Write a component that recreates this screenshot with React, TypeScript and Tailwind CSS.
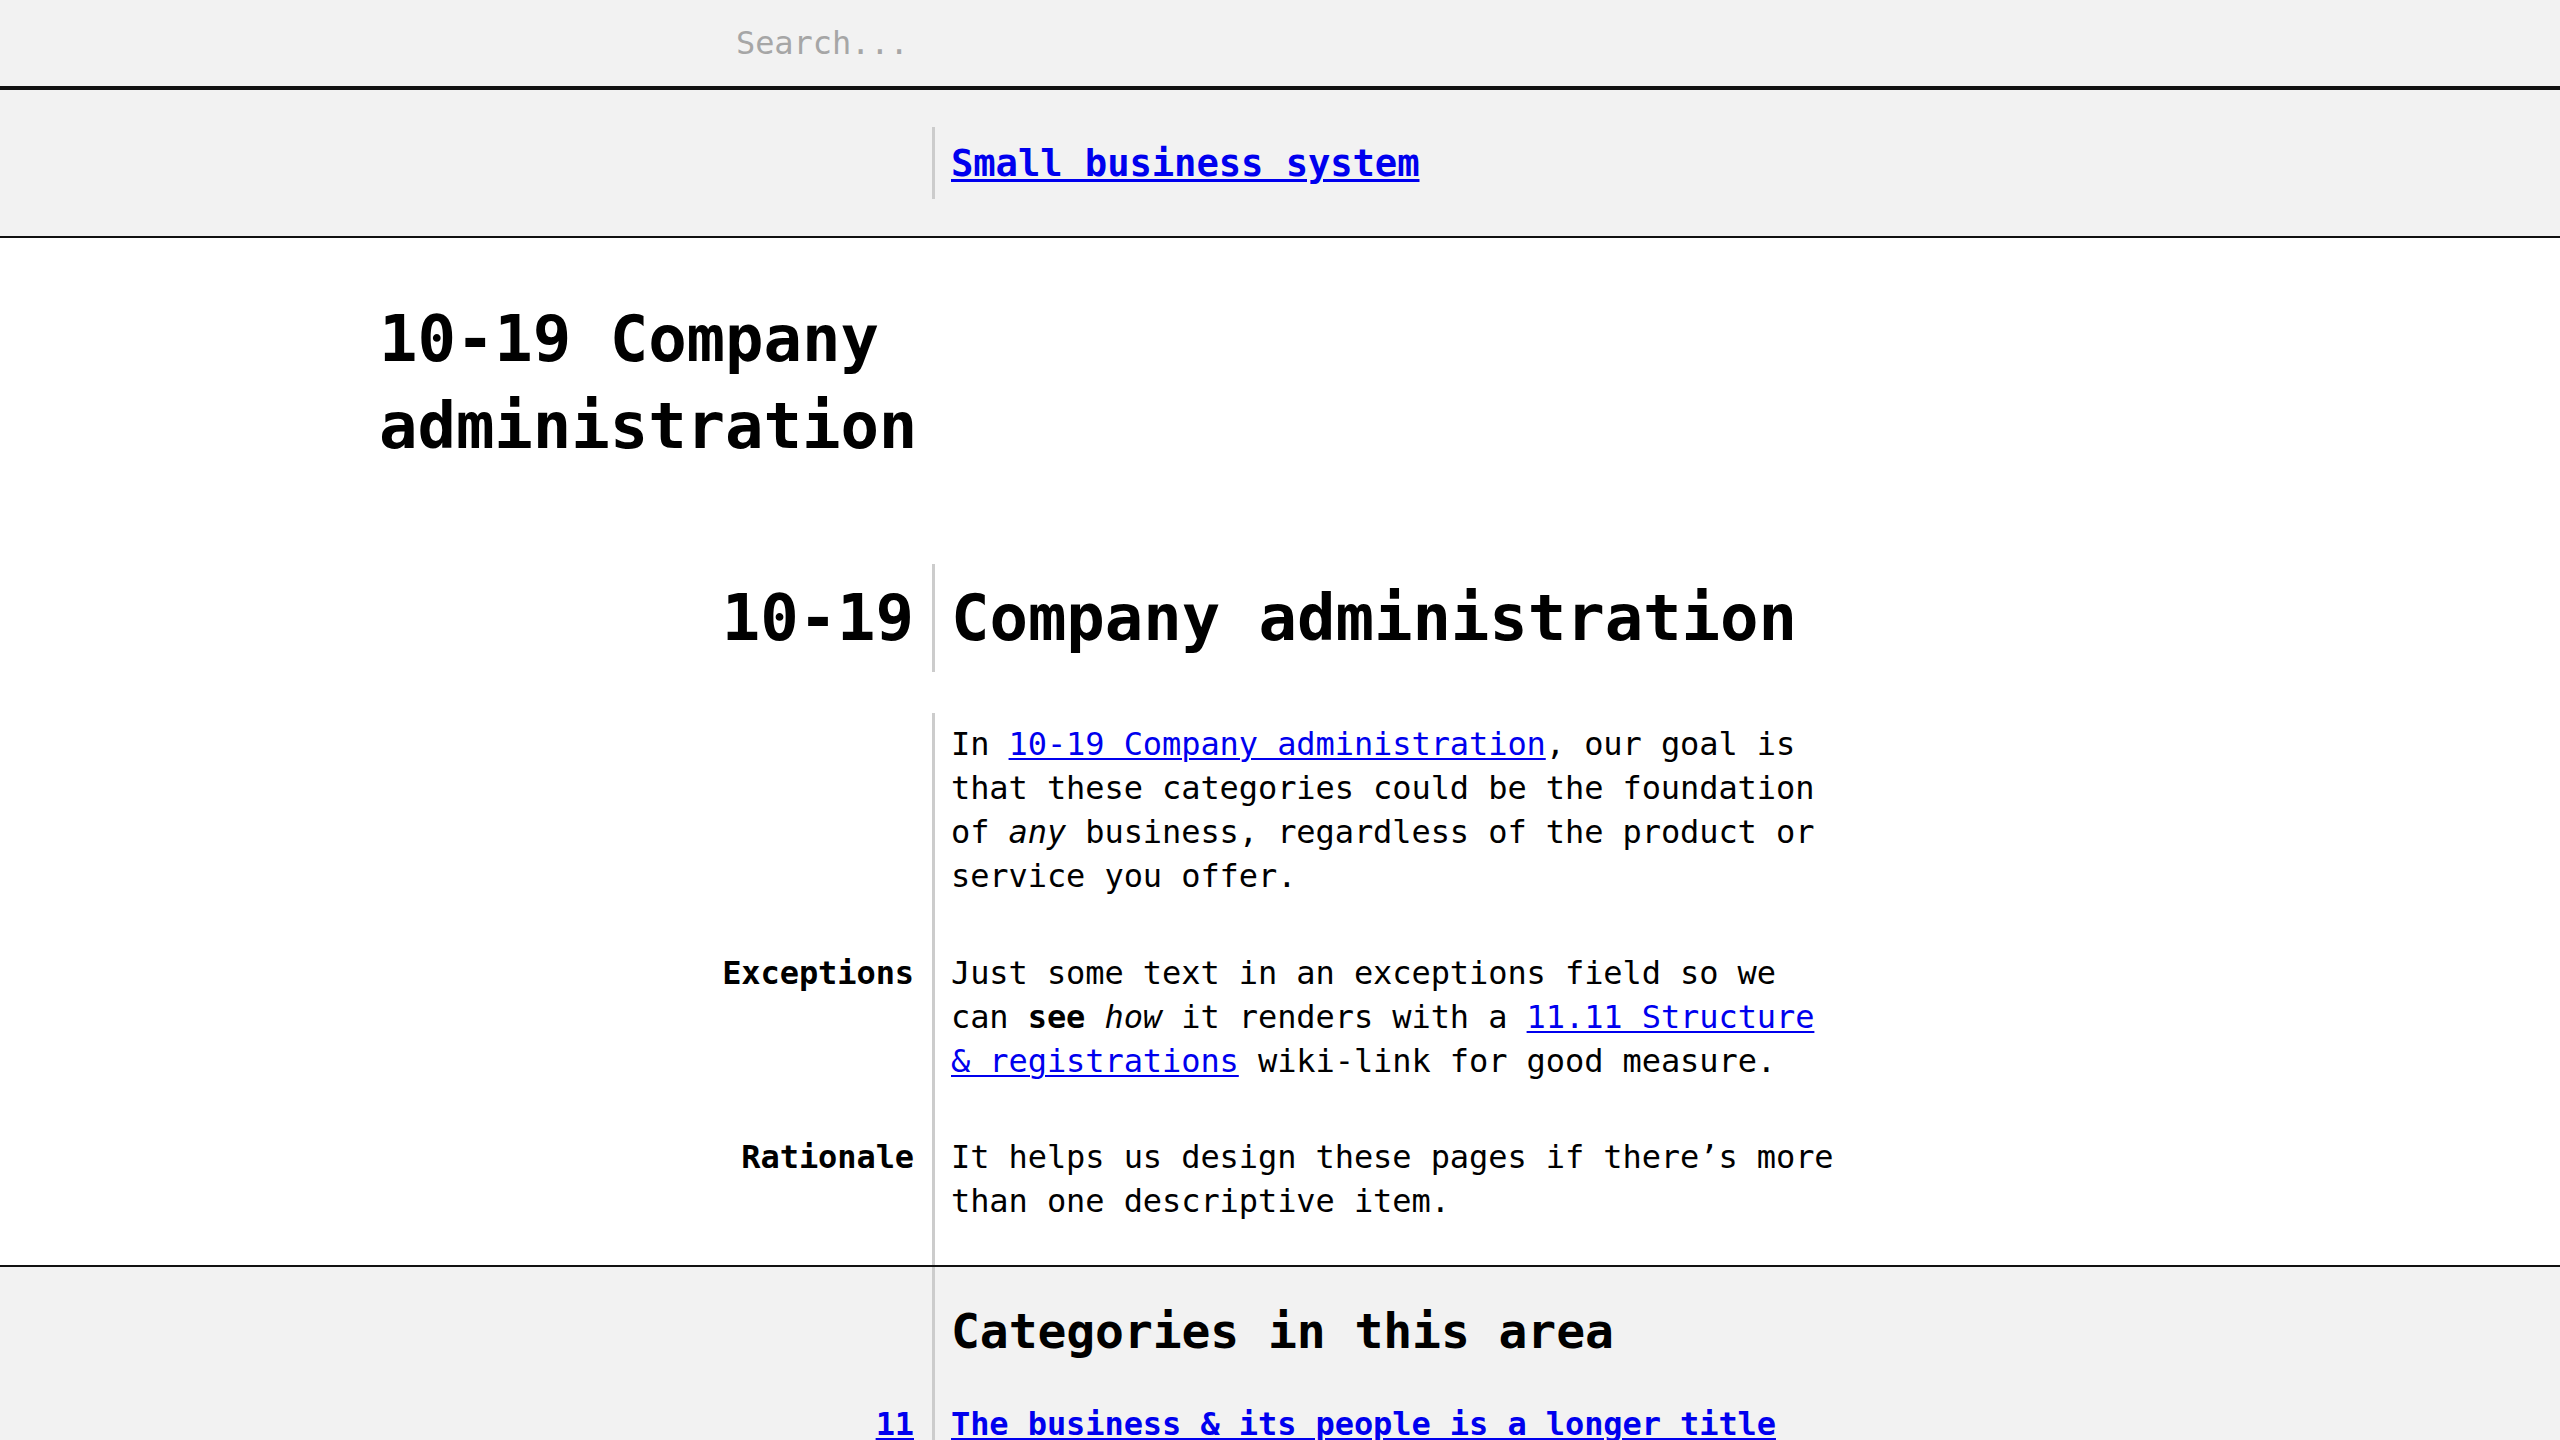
import React from "react";

const LINK = "text-[#0000ee] underline decoration-[3px] underline-offset-[3px]";
const LINK2 = "text-[#0000ee] underline decoration-2 underline-offset-[3px]";

function Row({
  left,
  children,
  rightClass = "",
  leftClass = "",
}: {
  left?: React.ReactNode;
  children?: React.ReactNode;
  rightClass?: string;
  leftClass?: string;
}) {
  return (
    <div className="flex">
      <div className={"w-[932px] shrink-0 pr-[18px] text-right " + leftClass}>{left}</div>
      <div className={"w-[914px] shrink-0 border-l-[3px] border-[#cccccc] pl-[16px] " + rightClass}>
        {children}
      </div>
    </div>
  );
}

export default function App() {
  return (
    <div className="min-h-screen bg-white font-['DejaVu_Sans_Mono','Liberation_Mono',monospace] text-[32px] leading-[44px] tracking-[-0.08px] text-black">
      {/* Search bar */}
      <header className="flex h-[90px] items-center border-b-4 border-[#111111] bg-[#f2f2f2]">
        <input
          type="text"
          placeholder="Search..."
          className="ml-[736px] w-[600px] bg-transparent text-[32px] text-black outline-none placeholder:text-[#a6a6a6]"
        />
      </header>

      {/* Breadcrumb */}
      <nav className="border-b-2 border-[#111111] bg-[#f2f2f2] py-[37px]">
        <Row rightClass="flex h-[72px] items-center">
          <a href="#" className={"text-[37.2px] font-bold leading-[44px] " + LINK}>
            Small business system
          </a>
        </Row>
      </nav>

      {/* Main */}
      <main className="border-b-2 border-[#111111] bg-white pt-[58px]">
        <h1 className="ml-[379px] w-[560px] text-[64px] font-bold leading-[87px]">
          10-19 Company administration
        </h1>

        <div className="mt-[94px]">
          <Row
            leftClass="text-[64px] font-bold leading-[108px]"
            rightClass="h-[108px] text-[64px] font-bold leading-[108px]"
            left="10-19"
          >
            <h2>Company administration</h2>
          </Row>
        </div>

        <div className="mt-[41px]">
          <Row rightClass="pt-[9px] pb-[53px]">
            <p className="max-w-[895px]">
              In{" "}
              <a href="#" className={LINK2}>
                10-19 Company administration
              </a>
              , our goal is that these categories could be the foundation of <em>any</em> business,
              regardless of the product or service you offer.
            </p>
          </Row>
          <Row left="Exceptions" leftClass="font-bold" rightClass="pb-[52px]">
            <p className="max-w-[895px]">
              Just some text in an exceptions field so we can <strong>see</strong> <em>how</em> it
              renders with a{" "}
              <a href="#" className={LINK2}>
                11.11 Structure &amp; registrations
              </a>{" "}
              wiki-link for good measure.
            </p>
          </Row>
          <Row left="Rationale" leftClass="font-bold" rightClass="pb-[42px]">
            <p className="max-w-[895px]">
              It helps us design these pages if there’s more than one descriptive item.
            </p>
          </Row>
        </div>
      </main>

      {/* Categories */}
      <section className="bg-[#f2f2f2]">
        <Row rightClass="pt-[31px] pb-[38px]">
          <h2 className="text-[48px] font-bold leading-[66px]">Categories in this area</h2>
        </Row>
        <Row
          left={
            <a href="#" className={"font-bold " + LINK}>
              11
            </a>
          }
          rightClass="pb-[40px]"
        >
          <a href="#" className={"font-bold " + LINK}>
            The business &amp; its people is a longer title
          </a>
        </Row>
      </section>
    </div>
  );
}
